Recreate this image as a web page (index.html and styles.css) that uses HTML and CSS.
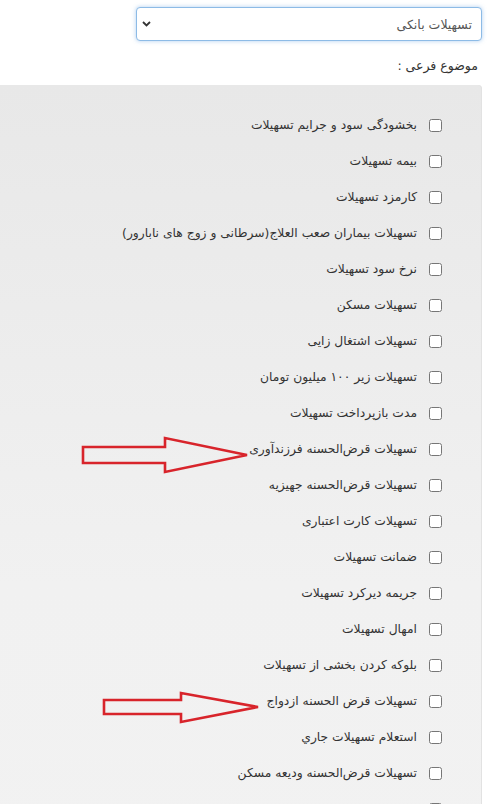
FILE: index.html
```html
<!DOCTYPE html>
<html lang="fa" dir="rtl">
<head>
    <meta charset="UTF-8">
    <meta name="viewport" content="width=device-width, initial-scale=1.0">
    <title>موضوع فرعی</title>
    <link rel="stylesheet" href="styles.css">
</head>
<body>
    <div class="page">
        <div class="select-box">
            <span class="select-value">تسهیلات بانکی</span>
            <svg class="chevron" width="9" height="6" viewBox="0 0 9 6">
                <path d="M1 1 L4.5 4.5 L8 1" fill="none" stroke="#333" stroke-width="1.8"/>
            </svg>
        </div>

        <div class="sub-label">موضوع فرعی :</div>

        <div class="panel">
            <label class="item"><input type="checkbox"><span>بخشودگی سود و جرایم تسهیلات</span></label>
            <label class="item"><input type="checkbox"><span>بیمه تسهیلات</span></label>
            <label class="item"><input type="checkbox"><span>کارمزد تسهیلات</span></label>
            <label class="item"><input type="checkbox"><span>تسهیلات بیماران صعب العلاج(سرطانی و زوج های نابارور)</span></label>
            <label class="item"><input type="checkbox"><span>نرخ سود تسهیلات</span></label>
            <label class="item"><input type="checkbox"><span>تسهیلات مسکن</span></label>
            <label class="item"><input type="checkbox"><span>تسهیلات اشتغال زایی</span></label>
            <label class="item"><input type="checkbox"><span>تسهیلات زیر ۱۰۰ میلیون تومان</span></label>
            <label class="item"><input type="checkbox"><span>مدت بازپرداخت تسهیلات</span></label>
            <label class="item"><input type="checkbox"><span>تسهیلات قرض‌الحسنه فرزندآوری</span></label>
            <label class="item"><input type="checkbox"><span>تسهیلات قرض‌الحسنه جهیزیه</span></label>
            <label class="item"><input type="checkbox"><span>تسهیلات کارت اعتباری</span></label>
            <label class="item"><input type="checkbox"><span>ضمانت تسهیلات</span></label>
            <label class="item"><input type="checkbox"><span>جریمه دیرکرد تسهیلات</span></label>
            <label class="item"><input type="checkbox"><span>امهال تسهیلات</span></label>
            <label class="item"><input type="checkbox"><span>بلوکه کردن بخشی از تسهیلات</span></label>
            <label class="item"><input type="checkbox"><span>تسهیلات قرض الحسنه ازدواج</span></label>
            <label class="item"><input type="checkbox"><span>استعلام تسهیلات جاري</span></label>
            <label class="item"><input type="checkbox"><span>تسهیلات قرض‌الحسنه ودیعه مسکن</span></label>
            <label class="item"><input type="checkbox"></label>
        </div>

        <!-- red annotation arrows drawn over the list -->
        <svg class="arrows" width="500" height="804" viewBox="0 0 500 804">
            <path d="M83 447 L165 447 L165 438 L247 455 L165 472 L165 463 L83 463 Z"
                  fill="none" stroke="#d8242b" stroke-width="2.6" stroke-linejoin="miter"/>
            <path d="M104 700 L181 700 L181 693 L258 707 L181 722 L181 714 L104 714 Z"
                  fill="none" stroke="#d8242b" stroke-width="2.6" stroke-linejoin="miter"/>
        </svg>
    </div>
</body>
</html>
```

FILE: styles.css
```css
body {
    margin: 0;
    background: #fff;
    font-family: "DejaVu Sans", Tahoma, sans-serif;
    color: #333;
    overflow: hidden;
}
.page {
    position: relative;
    padding: 7px 18px 0 0;
    height: 804px;
}
.select-box {
    width: 346px;
    height: 34px;
    box-sizing: border-box;
    margin-left: auto;
    display: flex;
    align-items: center;
    justify-content: space-between;
    padding: 0 9px 0 5px;
    border: 1px solid #8dbbe6;
    border-radius: 4px;
    box-shadow: 0 0 4px rgba(110, 165, 225, 0.55);
    background: #fff;
    font-size: 12.5px;
    color: #555;
}
.sub-label {
    margin-top: 15px;
    padding-right: 4px;
    font-size: 12.5px;
    color: #333;
    line-height: 20px;
}
.panel {
    margin-top: 9px;
    padding: 22px 40px 0 0;
    border-top-right-radius: 4px;
    background: linear-gradient(#e8e8e8, #f1f1f1 500px, #f2f2f2);
    box-shadow: inset -1px 0 0 #e2e2e2;
    min-height: 800px;
}
.item {
    display: flex;
    align-items: center;
    gap: 12px;
    height: 36px;
    font-size: 12.3px;
    color: #333;
}
.item input {
    margin: 0;
    width: 13px;
    height: 13px;
}
.arrows {
    position: absolute;
    left: 0;
    top: 0;
    pointer-events: none;
}
```
